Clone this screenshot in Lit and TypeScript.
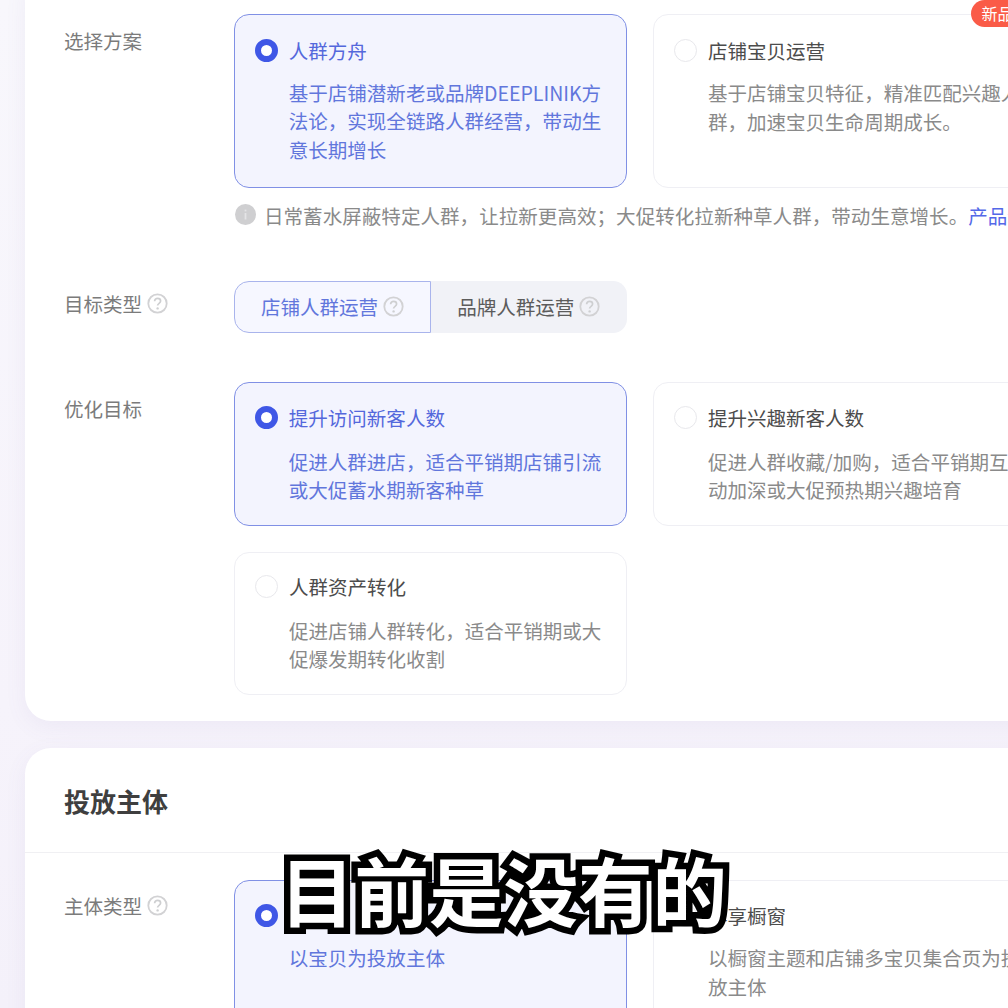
import { LitElement, html, css, svg } from "lit";
import { customElement } from "lit/decorators.js";

const q = html`<svg class="q" viewBox="0 0 21 21" aria-hidden="true"><circle cx="10.5" cy="10.5" r="9.2" fill="none" stroke="#d2d2d4" stroke-width="1.8"/><path d="M7.6 8.2c0-1.7 1.3-2.8 3-2.8s3 1.1 3 2.6c0 2.3-3 2.3-3 4.6" fill="none" stroke="#cecfd1" stroke-width="1.7"/><circle cx="10.6" cy="15.4" r="1.2" fill="#cecfd1"/></svg>`;

interface Opt { title: string; desc: string; on?: boolean; badge?: boolean }

@customElement("app-root")
export class AppRoot extends LitElement {
  static styles = css`
    :host {
      display: block;
      width: 1008px;
      height: 1008px;
      overflow: hidden;
      position: relative;
      background: linear-gradient(180deg, #f8f7fc 0%, #f6f3fb 70%, #f4f1fa 100%);
      font-family: "Noto Sans CJK SC", "Noto Sans", sans-serif;
      font-size: 19.55px;
      color: #555;
    }
    .page {
      display: flex;
      flex-direction: column;
      gap: 27px;
      margin: -30px 0 0 25px;
      width: 1100px;
    }
    .card {
      background: #fff;
      border-radius: 26px;
      box-shadow: 0 6px 22px rgba(120, 100, 170, 0.07);
    }
    .first {
      padding: 44px 0 26px 39px;
      display: flex;
      flex-direction: column;
    }
    .row { display: flex; }
    .label {
      width: 170px;
      flex: none;
      padding-top: 12px;
      line-height: 30px;
      color: #7b7b7b;
      display: flex;
      align-items: flex-start;
      gap: 5px;
    }
    .label .q { margin-top: 4px; }
    .q { width: 21px; height: 21px; flex: none; }
    .grid {
      display: grid;
      grid-template-columns: 392.5px 392.5px;
      column-gap: 26.5px;
      row-gap: 26px;
    }
    .opt {
      position: relative;
      box-sizing: border-box;
      border: 1.6px solid #efeff4;
      border-radius: 15px;
      padding: 19.9px 18px 0 19.9px;
    }
    .opt.on { border: 1.8px solid #8090e5; background: #f3f4fe; padding: 19.7px 18px 0 19.7px; }
    .head { display: flex; align-items: center; gap: 11px; height: 32px; color: #4c4c4c; }
    .radio {
      box-sizing: border-box;
      width: 23px;
      height: 23px;
      border-radius: 50%;
      border: 1.6px solid #e8e8ec;
      background: #fff;
      flex: none;
    }
    .opt.on .radio { border: 6.5px solid #3f57e6; }
    .opt.on .head { color: #5468dc; }
    .desc { margin: 12px 0 0 34px; line-height: 28.8px; color: #8a8a8a; }
    .opt.on .desc { color: #6176dc; }
    .badge {
      position: absolute;
      top: -15px;
      right: -2px;
      width: 76px;
      height: 27px;
      box-sizing: border-box;
      padding-left: 11px;
      border-radius: 14px 14px 0 14px;
      background: #fa5b47;
      color: #fff;
      font-size: 16px;
      line-height: 27px;
    }
    .tall { height: 174px; }
    .opt.mid { height: 144px; padding-top: 18.9px; }
    .mid .desc { margin-top: 14px; line-height: 28.4px; }
    .opt.low { height: 143px; padding-top: 17.9px; }
    .low .desc { margin-top: 14px; line-height: 28.4px; }
    .opt.lower { padding-top: 18.9px; }
    .hint {
      display: flex;
      align-items: center;
      gap: 8px;
      height: 30px;
      margin: 12px 0 0 1px;
      white-space: nowrap;
      letter-spacing: 0.03px;
      color: #8a8a8a;
    }
    .hint a { color: #5468e8; }
    .info { width: 21px; height: 21px; flex: none; margin-top: -1px; }
    .seg { display: flex; width: 392.5px; height: 52px; }
    .seg div {
      box-sizing: border-box;
      display: flex;
      align-items: center;
      justify-content: center;
      gap: 5px;
      flex: 1;
      padding-bottom: 2px;
      background: #f1f2f7;
      border-radius: 0 14px 14px 0;
      color: #5c5c5c;
    }
    .seg .sel {
      flex: none;
      width: 197px;
      background: #f6f7ff;
      border: 1.5px solid #a9b4ec;
      border-radius: 15px 0 0 15px;
      color: #6176dc;
    }
    .r1 { margin-bottom: 51px; }
    .r2 { margin-bottom: 49px; }
    .r2 .label { padding-top: 8px; }
    .title {
      height: 105px;
      box-sizing: border-box;
      padding-left: 39px;
      display: flex;
      align-items: center;
      border-bottom: 1.5px solid #f0f0f3;
      font-size: 26px;
      font-weight: 700;
      color: #3f3f3f;
    }
    .body { padding: 27px 0 0 39px; }
    .body .label { padding-top: 11px; }
    .second { height: 400px; }
    .caption {
      position: absolute;
      left: 280px;
      top: 844px;
      font-size: 74.5px;
      line-height: 90px;
      font-weight: 700;
      white-space: nowrap;
      color: #fff;
      -webkit-text-stroke: 13px #000;
      paint-order: stroke fill;
    }
  `;

  private opt(o: Opt, cls: string) {
    return html`<div class="opt ${o.on ? "on" : ""} ${cls}">
      ${o.badge ? html`<span class="badge">新品</span>` : ""}
      <div class="head"><span class="radio"></span><span>${o.title}</span></div>
      <div class="desc">${o.desc}</div>
    </div>`;
  }

  render() {
    const info = html`<svg class="info" viewBox="0 0 21 21" aria-hidden="true"><circle cx="10.5" cy="10.5" r="10.5" fill="#cfcfd1"/>${svg`<rect x="9.6" y="9" width="1.8" height="6.5" fill="#e4e4e6"/><rect x="9.6" y="5.6" width="1.8" height="1.8" fill="#e4e4e6"/>`}</svg>`;
    return html`
      <div class="page">
        <section class="card first">
          <div class="row r1">
            <div class="label">选择方案</div>
            <div>
              <div class="grid">
                ${this.opt({ title: "人群方舟", desc: "基于店铺潜新老或品牌DEEPLINIK方法论，实现全链路人群经营，带动生意长期增长", on: true }, "tall")}
                ${this.opt({ title: "店铺宝贝运营", desc: "基于店铺宝贝特征，精准匹配兴趣人群，加速宝贝生命周期成长。", badge: true }, "tall")}
              </div>
              <div class="hint">${info}<span>日常蓄水屏蔽特定人群，让拉新更高效；大促转化拉新种草人群，带动生意增长。<a>产品介绍</a></span></div>
            </div>
          </div>
          <div class="row r2">
            <div class="label">目标类型 ${q}</div>
            <div class="seg">
              <div class="sel">店铺人群运营 ${q}</div>
              <div>品牌人群运营 ${q}</div>
            </div>
          </div>
          <div class="row">
            <div class="label">优化目标</div>
            <div class="grid">
              ${this.opt({ title: "提升访问新客人数", desc: "促进人群进店，适合平销期店铺引流或大促蓄水期新客种草", on: true }, "mid")}
              ${this.opt({ title: "提升兴趣新客人数", desc: "促进人群收藏/加购，适合平销期互动加深或大促预热期兴趣培育" }, "mid")}
              ${this.opt({ title: "人群资产转化", desc: "促进店铺人群转化，适合平销期或大促爆发期转化收割" }, "low")}
            </div>
          </div>
        </section>
        <section class="card second">
          <div class="title">投放主体</div>
          <div class="body">
            <div class="row">
              <div class="label">主体类型 ${q}</div>
              <div class="grid">
                ${this.opt({ title: "宝贝", desc: "以宝贝为投放主体", on: true }, "tall lower")}
                ${this.opt({ title: "尊享橱窗", desc: "以橱窗主题和店铺多宝贝集合页为投放主体" }, "tall lower")}
              </div>
            </div>
          </div>
        </section>
      </div>
      <div class="caption">目前是没有的</div>
    `;
  }
}
